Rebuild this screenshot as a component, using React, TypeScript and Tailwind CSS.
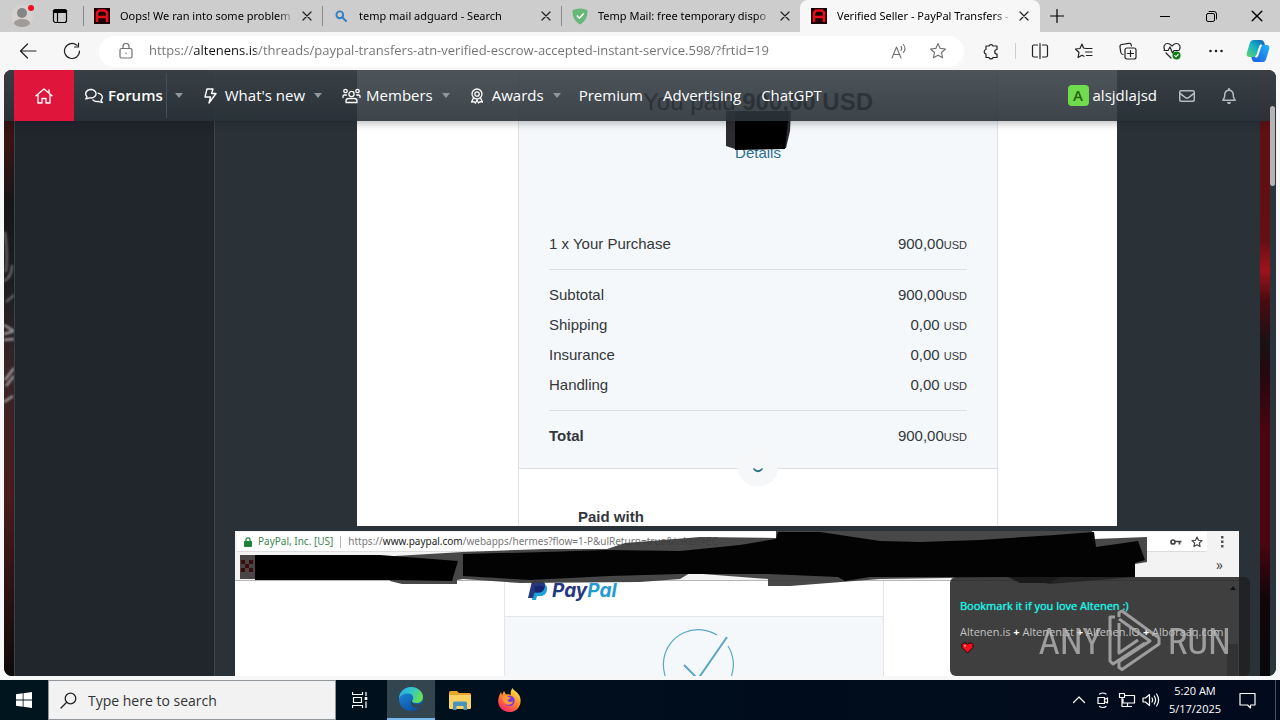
import type { ReactNode } from "react";
import { FaRegBell, FaRegComments, FaRegEnvelope } from "react-icons/fa6";

const line = {
  fill: "none",
  stroke: "currentColor",
  strokeLinecap: "round" as const,
  strokeLinejoin: "round" as const,
};

function Cross({ size = 10 }: { size?: number }) {
  return (
    <svg width={size} height={size} viewBox="0 0 10 10" {...line} strokeWidth="1.2">
      <path d="M1 1l8 8M9 1l-8 8" />
    </svg>
  );
}

function SiteMark() {
  return (
    <svg width="16" height="16" viewBox="0 0 16 16">
      <rect width="16" height="16" fill="#1a0000" />
      <path d="M3 14V4.500L5 2.500h6l2 2V14M3 9h10" fill="none" stroke="#e3101c" strokeWidth="2.600" />
    </svg>
  );
}

function SearchMark() {
  return (
    <svg width="12" height="12" viewBox="0 0 12 12" {...line} stroke="#2f7fc4" strokeWidth="1.900">
      <circle cx="4.800" cy="4.800" r="3.400" />
      <path d="M7.500 7.500L11 11" />
    </svg>
  );
}

function ShieldMark() {
  return (
    <svg width="16" height="17" viewBox="0 0 16 17">
      <path d="M8 .5c2.500.2 5.300.8 7.500 1.800 0 5-.8 10.200-7.500 14.200C1.300 12.500.5 7.300.5 2.300 2.700 1.300 5.500.7 8 .5z" fill="#67b779" />
      <path d="M4.800 7.500l2.600 2.700 4.300-4.700" fill="none" stroke="#fff" strokeWidth="1.400" />
    </svg>
  );
}

function Tab({ icon, title, active }: { icon: ReactNode; title: string; active?: boolean }) {
  return (
    <div
      className={
        active
          ? "flex h-8 w-60 min-w-0 items-center rounded-t-lg bg-[#f7f7f7] pr-[8px] pl-[11px]"
          : "flex h-8 w-[239px] min-w-0 items-center bg-[linear-gradient(#8a8a8a,#8a8a8a)] bg-[length:1px_20px] bg-left bg-no-repeat pr-[7px] pl-[11px]"
      }
    >
      <span className="flex w-4 shrink-0 justify-center">{icon}</span>
      <a
        href="#tab"
        className="ml-[10px] min-w-0 flex-1 overflow-hidden font-['Noto_Sans','Open_Sans',sans-serif] text-[11px] whitespace-nowrap text-black [mask-image:linear-gradient(to_right,black_90%,transparent)]"
      >
        {title}
      </a>
      <button aria-label="Close tab" className="ml-1 flex w-4 shrink-0 justify-center text-[#222]">
        <Cross />
      </button>
    </div>
  );
}

function TabStrip() {
  return (
    <div className="flex h-8 shrink-0 items-center bg-[#cdcdcd]">
      <button aria-label="Profile" className="ml-3 w-6">
        <svg width="24" height="26" viewBox="0 0 24 26">
          <circle cx="10" cy="13" r="11" fill="#d5d2cf" />
          <circle cx="10" cy="10" r="5" fill="#858585" />
          <ellipse cx="10" cy="20" rx="8" ry="4" fill="#a09b98" />
          <circle cx="19" cy="5" r="3" fill="#e81123" />
        </svg>
      </button>
      <button aria-label="Tab actions" className="mr-[15px] ml-4">
        <svg width="16" height="16" viewBox="0 0 16 16" {...line} strokeWidth="1.200">
          <rect x="1.500" y="1.500" width="13" height="13" rx="2" />
          <path d="M1.500 4.500h13M5.500 4.500v10" />
          <path d="M2 3h12" strokeWidth="2.500" />
        </svg>
      </button>
      <Tab icon={<SiteMark />} title="Oops! We ran into some problem" />
      <Tab icon={<SearchMark />} title="temp mail adguard - Search" />
      <Tab icon={<ShieldMark />} title="Temp Mail: free temporary dispo" />
      <Tab active icon={<SiteMark />} title="Verified Seller - PayPal Transfers -" />
      <button aria-label="New tab" className="ml-[10px]">
        <svg width="14" height="14" viewBox="0 0 14 14" {...line} strokeWidth="1.200">
          <path d="M7 .5v13M.5 7h13" />
        </svg>
      </button>
      <div className="ml-auto flex items-center">
        <button aria-label="Minimize" className="flex w-[46px] justify-center">
          <svg width="10" height="10" viewBox="0 0 10 10" {...line}>
            <path d="M0 5.500h10" />
          </svg>
        </button>
        <button aria-label="Restore" className="flex w-[46px] justify-center">
          <svg width="11" height="11" viewBox="0 0 11 11" {...line}>
            <rect x=".5" y="2.500" width="8" height="8" rx="1.500" />
            <path d="M3 .5h5a2.500 2.500 0 012.500 2.500v5" />
          </svg>
        </button>
        <button aria-label="Close window" className="flex w-[46px] justify-center">
          <Cross size={12} />
        </button>
      </div>
    </div>
  );
}

function ToolIcon({ label, children }: { label: string; children: ReactNode }) {
  return (
    <button aria-label={label} className="flex w-11 justify-center text-[#222]">
      <svg width="18" height="18" viewBox="0 0 18 18" {...line} strokeWidth="1.200">
        {children}
      </svg>
    </button>
  );
}

const star = "M9 1.500l2.200 4.900 5.300.6-4 3.500 1.100 5.300L9 13.200l-4.600 2.600 1.100-5.300-4-3.500 5.300-.6z";

function Toolbar() {
  return (
    <div className="flex h-[38px] shrink-0 items-center bg-[#f7f7f7] pl-[6px]">
      <ToolIcon label="Back">
        <path d="M17 9H1.500M8.500 2L1.500 9l7 7" />
      </ToolIcon>
      <ToolIcon label="Refresh">
        <path d="M16.500 9A7.500 7.500 0 1 1 14 3.400M15.500 1v4h-4" />
      </ToolIcon>
      <label className="ml-[5px] flex h-[31px] min-w-0 flex-1 items-center rounded-full bg-white text-[#707070]">
        <svg className="mr-4 ml-5 shrink-0" width="14" height="16" viewBox="0 0 14 16" {...line} strokeWidth="1.200">
          <rect x="1" y="5.500" width="12" height="9.500" rx="1.500" />
          <path d="M4 5.500V3.500a3 3 0 016 0v2M7 10v.6" />
        </svg>
        <input
          aria-label="Address"
          defaultValue="https://altenens.is/threads/paypal-transfers-atn-verified-escrow-accepted-instant-service.598/?frtid=19"
          className="min-w-0 flex-1 bg-[linear-gradient(to_right,#707070_45px,#111_45px,#111_107px,#707070_107px)] bg-clip-text text-[13px] text-transparent outline-none"
        />
        <svg className="mr-[21px] shrink-0" width="17" height="17" viewBox="0 0 17 17" {...line} strokeWidth="1.100">
          <path d="M1 15L5.500 4 10 15M2.500 11.500h6M10 3.500q1.500 1.500 0 4M12.300 1.500q3.500 4 0 8" />
        </svg>
        <svg className="mr-[17px] shrink-0" width="18" height="18" viewBox="0 0 18 18" {...line} strokeWidth="1.100">
          <path d={star} />
        </svg>
      </label>
      <div className="ml-[5px] flex items-center">
        <ToolIcon label="Extensions">
          <path d="M4 4h3a2.100 2.100 0 014 0h4v3.500a2.100 2.100 0 000 4.500v3.500h-4a2.100 2.100 0 01-4 0H4V12a2.300 2.300 0 010-4.500z" />
        </ToolIcon>
        <span className="mx-0.5 h-4 w-px bg-[#cfcfcf]" />
        <ToolIcon label="Split screen">
          <path d="M9 1.500v15M6.500 3H3a1.500 1.500 0 00-1.500 1.500v9A1.500 1.500 0 003 15h3.500M11.500 3H15a1.500 1.500 0 011.500 1.500v9A1.500 1.500 0 0115 15h-3.500" />
        </ToolIcon>
        <ToolIcon label="Favorites">
          <path d="M11 6.500L8.500 6 7 2 5 6.500.5 7 4 10.500 3 15.500l4-2.300 2 1.100M11.500 6.500h5.500M10.500 10h6.500M11.500 13.500h5.500" />
        </ToolIcon>
        <ToolIcon label="Collections">
          <rect x="6" y="6" width="11" height="11" rx="2" />
          <path d="M11.500 8.500v6M8.500 11.500h6M4 12.500c-1.500 0-2-1-2.300-2.300L1 5c-.2-1.500.4-2.300 1.700-2.500l7-1.200c1.300-.2 2.300.4 2.500 1.700l.2 1" />
        </ToolIcon>
        <ToolIcon label="Browser essentials">
          <path d="M1.500 7.500C0 4 2 1.500 4.500 1.500 7 1.500 8 3 9 4c1-1 2-2.500 4.500-2.500S18 4 16.500 7.500M1 8.500h4l2-3.500 2.500 6 1.500-2.500h5M3 11l5 5" />
          <circle cx="13.500" cy="13.500" r="4" fill="#107c10" stroke="none" />
          <path d="M11.800 13.600l1.200 1.200 2.200-2.400" stroke="#fff" />
        </ToolIcon>
        <ToolIcon label="Settings and more">
          <g fill="currentColor" stroke="none">
            <circle cx="3.500" cy="9" r="1.300" />
            <circle cx="9" cy="9" r="1.300" />
            <circle cx="14.500" cy="9" r="1.300" />
          </g>
        </ToolIcon>
        <button aria-label="Copilot" className="mr-[10px] ml-2">
          <svg width="24" height="24" viewBox="0 0 24 24">
            <defs>
              <linearGradient id="cpA" x1="0" y1="1" x2="1" y2="0">
                <stop offset="0" stopColor="#62d36f" />
                <stop offset=".5" stopColor="#16b1c4" />
                <stop offset="1" stopColor="#0d5bb5" />
              </linearGradient>
              <linearGradient id="cpB" x1="0" y1="1" x2="1" y2="0">
                <stop offset="0" stopColor="#1b5be0" />
                <stop offset="1" stopColor="#24b4f5" />
              </linearGradient>
            </defs>
            <path d="M7 1h8q2.500 0 3.300 2.500L19 6h-3q-2 0-2.600 2L11 16q-.7 2-3 2H3.500Q0 18 .8 14L4 3.500Q5 1 7 1z" fill="url(#cpA)" />
            <path d="M17 23H9Q6.500 23 6 20.500L5.300 18H8q2.300 0 3-2l2.400-8q.6-2 2.600-2h4.500q3.500 0 2.700 4L20 20.500q-1 2.500-3 2.500z" fill="url(#cpB)" />
            <path d="M9.500 18q1.500-.5 2-2l2.500-8q.5-1.500 1.500-2" fill="none" stroke="#fff" strokeWidth="2" />
          </svg>
        </button>
      </div>
    </div>
  );
}

function Caret() {
  return (
    <button aria-label="Open submenu" className="flex w-6 justify-center">
      <svg width="8" height="5" viewBox="0 0 8 5" fill="#8e979d">
        <path d="M0 0h8L4 5z" />
      </svg>
    </button>
  );
}

function SiteHeader() {
  return (
    <header className="absolute inset-x-0 top-0 z-10 flex h-[51px] items-center bg-[linear-gradient(rgba(58,66,72,0.9),rgba(42,50,57,0.91))] pl-[10px] text-[15px] text-white shadow-[0_0_8px_2px_rgba(20,20,30,0.3)]">
      <a href="#home" aria-label="Home" className="flex h-full w-[60px] items-center justify-center bg-[#e0153b]">
        <svg width="18" height="16" viewBox="0 0 18 16" {...line} strokeWidth="1.300">
          <path d="M1 7.800L9 1l8 6.800M3 6.500V15h4v-4.500h4V15h4V6.500M14 2v3" />
        </svg>
      </a>
      <nav className="flex items-center">
        <a href="#forums" className="flex items-center gap-[5px] pr-[3px] pl-[11px] font-semibold">
          <FaRegComments size={18} className="shrink-0" />
          Forums
        </a>
        <span className="h-[45px] w-px bg-[#465159]" />
        <Caret />
        <a href="#new" className="flex items-center gap-2 pr-px pl-3">
          <svg width="14" height="16" viewBox="0 0 14 16" {...line} strokeWidth="1.400">
            <path d="M4 1h6L8.500 5.500H13L6 15l1.500-6H2z" />
          </svg>
          What's new
        </a>
        <Caret />
        <a href="#members" className="flex items-center gap-[5px] pr-px pl-3">
          <svg width="19" height="16" viewBox="0 0 19 16" {...line} strokeWidth="1.300">
            <circle cx="9.500" cy="6" r="2.600" />
            <circle cx="3.500" cy="3" r="1.700" />
            <circle cx="15.500" cy="3" r="1.700" />
            <path d="M4 14.500V13q0-2.500 2.500-2.500h6q2.500 0 2.500 2.500v1.500zM1 9.500V8q0-1 1.500-1h2M18 9.500V8q0-1-1.500-1h-2" />
          </svg>
          Members
        </a>
        <Caret />
        <a href="#awards" className="flex items-center gap-2 pr-px pl-3">
          <svg width="14" height="16" viewBox="0 0 14 16" {...line} strokeWidth="1.300">
            <circle cx="7" cy="6" r="5" />
            <circle cx="7" cy="6" r="2.200" />
            <path d="M3.500 10L1.500 14l2.500-.3L5.500 15 7 12l1.500 3 1.500-1.300 2.500.3-2-4" />
          </svg>
          Awards
        </a>
        <Caret />
        <a href="#premium" className="px-[10px]">Premium</a>
        <a href="#advertising" className="px-[10px]">Advertising</a>
        <a href="#chatgpt" className="px-[10px]">ChatGPT</a>
      </nav>
      <div className="mr-[39px] ml-auto flex items-center">
        <a href="#account" className="flex items-center gap-1">
          <span className="flex size-[21px] items-center justify-center rounded-sm bg-[#70db4d] text-[15px] font-semibold text-[#24640f]">A</span>
          alsjdlajsd
        </a>
        <a href="#inbox" aria-label="Inbox" className="ml-[22px] text-[#b4bbc0]">
          <FaRegEnvelope size={16} />
        </a>
        <a href="#alerts" aria-label="Alerts" className="ml-[26px] text-[#b4bbc0]">
          <FaRegBell size={16} />
        </a>
      </div>
    </header>
  );
}

const receipt = [
  { label: "1 x Your Purchase", amount: "900,00", end: true },
  { label: "Subtotal", amount: "900,00" },
  { label: "Shipping", amount: "0,00 " },
  { label: "Insurance", amount: "0,00 " },
  { label: "Handling", amount: "0,00 ", end: true },
  { label: "Total", amount: "900,00", total: true },
];

function Receipt() {
  return (
    <section className="mx-auto h-[456px] w-full max-w-[760px] overflow-hidden bg-white pl-[42px] font-['Liberation_Sans',sans-serif] text-[15px] text-[#33373b]">
      <div className="mx-auto h-full w-[480px] border-x border-[#dfe2e5]">
        <div className="relative border-b border-[#dcdfe2] bg-[#f5f8fa] px-[30px] pt-[17px] pb-[17px]">
          <h1 className="text-center text-[24px] leading-[30px] text-black">
            You paid <b>900,00 USD</b>
          </h1>
          <div className="relative mt-[26px] mb-[66px] text-center leading-5">
            <a href="#details" className="text-[#2a6f94]">Details</a>
            <svg className="absolute -top-8 left-1/2 -ml-8" width="65" height="40" viewBox="0 0 65 40">
              <path d="M0 0h65l-1 20-4 17-51 1-9-3z" fill="#2c2c2e" />
              <path d="M9 0h54l-4 38-50 1z" fill="#000" />
            </svg>
          </div>
          <table className="w-full border-collapse leading-[30px]">
            <tbody>
              {receipt.map((r, i) => (
                <tr key={r.label} className={r.end ? "border-b border-[#dadfe3]" : ""}>
                  <th
                    scope="row"
                    className={
                      (r.total ? "text-left font-bold " : "text-left font-normal ") +
                      (r.end ? "pb-[10px] " : "") +
                      (i === 1 || r.total ? "pt-[10px]" : "")
                    }
                  >
                    {r.label}
                  </th>
                  <td
                    className={
                      "text-right whitespace-pre " + (r.end ? "pb-[10px] " : "") + (i === 1 || r.total ? "pt-[10px]" : "")
                    }
                  >
                    {r.amount}
                    <span className="text-[11px] leading-none">USD</span>
                  </td>
                </tr>
              ))}
            </tbody>
          </table>
          <button
            aria-label="Show more"
            className="absolute -bottom-[18px] left-1/2 -ml-5 flex h-9 w-10 items-center justify-center rounded-full bg-[#f5f7f9] pt-1"
          >
            <svg width="10" height="5" viewBox="0 0 10 5" {...line} stroke="#2a6f8c" strokeWidth="1.700">
              <path d="M1 1l1 1q3 2.500 6 0l1-1" />
            </svg>
          </button>
        </div>
        <h2 className="mt-[37px] ml-[59px] font-bold">Paid with</h2>
      </div>
    </section>
  );
}

function Redaction() {
  return (
    <svg className="absolute top-0 left-0" width="920" height="56" viewBox="235 531 920 56">
      <rect x="240" y="555" width="15" height="24" fill="#4b4444" />
      <path d="M241 560h4v4h-4zM249 560h4v4h-4zM245 564h4v4h-4zM241 568h4v4h-4zM249 568h4v4h-4z" fill="#3a0d0d" />
      <path d="M395 556L463 552 545 549 607 549 625 543 700 537 776 538 776 531 1092 531 1094 539 1147 537 1147 562 1135 564V577L1050 584 1010 577 880 579 790 586H768V579L690 573 680 579 640 582 520 583 463 579 457 580V584H402L390 581z" fill="#3a3838" fillOpacity=".92" />
      <path d="M255 555H380L458 561 452 581 395 580 255 580z" fill="#000" />
      <path d="M463 554L545 552 607 550 680 551 740 545 776 539 778 532 820 532 880 541 920 542 980 540 1055 535 1094 532 1096 547 1138 541 1145 560 1135 563V577H1060L1050 583 1020 583 1008 577 870 577 845 581 838 577 768 574 690 574 680 574 610 576 530 580 463 576z" fill="#030303" />
    </svg>
  );
}

function BrowserCapture() {
  return (
    <section className="relative mt-[5px] min-h-0 w-full flex-1 overflow-hidden bg-white">
      <div className="flex h-[50px] flex-col border-b border-[#b5b5b5] bg-[#f3f3f3]">
        <div className="flex items-center pt-[1px] pr-[15px] pl-[2px] font-['Noto_Sans',sans-serif] text-[10px] text-[#777]">
          <div className="flex h-5 min-w-0 flex-1 items-center border-b border-[#ddd] bg-white pr-1 pl-[7px] whitespace-nowrap">
            <svg width="8" height="10" viewBox="0 0 8 10">
              <rect y="4" width="8" height="6" rx="1" fill="#1c8436" />
              <path d="M2 4V2.800a2 2 0 014 0V4" fill="none" stroke="#1c8436" strokeWidth="1.300" />
            </svg>
            <span className="ml-[6px] text-[#3d8552]">PayPal, Inc. [US]</span>
            <span className="mx-[7px] h-3 w-px bg-[#bbb]" />
            <span className="min-w-0 flex-1 overflow-hidden">
              https://<span className="text-[#222]">www.paypal.com</span>/webapps/hermes?flow=1-P&amp;ulReturn=true&amp;token=EC
            </span>
            <svg className="mr-[9px]" width="12" height="8" viewBox="0 0 12 8" fill="none" stroke="#444" strokeWidth="1.700">
              <circle cx="3" cy="4" r="2" />
              <path d="M5 3.500h6.500M9.500 4v2.500" />
            </svg>
            <svg width="12" height="12" viewBox="0 0 18 18" {...line} stroke="#444" strokeWidth="1.800">
              <path d={star} />
            </svg>
          </div>
          <svg className="ml-[14px]" width="3" height="12" viewBox="0 0 3 12" fill="#555">
            <path d="M0 0h2.500v2.500H0zM0 4.500h2.500V7H0zM0 9h2.500v2.500H0z" />
          </svg>
        </div>
        <span className="mt-[5px] mr-4 self-end text-[14px] leading-4 text-[#444]">»</span>
      </div>
      <div className="ml-[269px] flex h-full w-[380px] flex-col border-x border-[#e4e6e8]">
        <div className="flex h-9 shrink-0 items-start border-b border-[#e4e6e8] pl-[23px]">
          <svg width="20" height="19" viewBox="0 0 20 19">
            <path d="M7 3h8q5 1 4 6-1 6-7 6H9l-1 4H4z" fill="#1da0dc" />
            <path d="M4 0h8q6 0 5 5.500-1 6-7 6H6.500L5 17H0z" fill="#25377e" />
            <path d="M7 5h6q3 0 3.500 1.500-1.500 5-6.500 5H7z" fill="#17266e" />
          </svg>
          <span className="ml-1 font-['Inter',sans-serif] text-[19px] leading-[19px] font-bold text-[#25377e] italic">
            Pay<span className="text-[#259bd3]">Pal</span>
          </span>
        </div>
        <div className="flex flex-1 justify-center bg-[#f5f8fa] pt-[11px] pl-[10px]">
          <svg width="74" height="74" viewBox="0 0 74 74" fill="none" stroke="#5ba7c2">
            <path d="M55 7A35 35 0 1 0 66 18" strokeWidth="1.200" />
            <path d="M22 37L36 51 65 9" strokeWidth="2" />
          </svg>
        </div>
      </div>
      <Redaction />
    </section>
  );
}

function Notice() {
  return (
    <aside className="absolute right-[26px] bottom-0 z-10 h-[99px] w-[300px] rounded-md bg-[rgba(32,32,32,0.86)] pt-[19px] pl-[10px] text-[11px] text-[#c2c2c2]">
      <p className="leading-5 text-[#1ff5e6] [text-shadow:0_0_1px_#1ff5e6]">Bookmark it if you love Altenen :)</p>
      <p className="mt-[6px] leading-5 whitespace-nowrap">
        <a href="#is">Altenen.is</a> <b className="text-white">+</b> <a href="#st">Altenen.st</a> <b className="text-white">+</b>{" "}
        <a href="#io">Altenen.IO</a> <b className="text-white">+</b> <a href="#alboraaq">Alboraaq.com</a>
      </p>
      <svg className="ml-[1px]" width="13" height="12" viewBox="0 0 13 12">
        <path d="M6.500 11L1 5.500V2.500L2.500 1H5l1.500 1.500L8 1h2.500L12 2.500v3z" fill="#f30f1c" stroke="#2a0000" />
        <path d="M3 3h2v1.500H3z" fill="#ff9a9a" />
      </svg>
      <div className="absolute top-2 right-3 bottom-0 flex w-[11px] flex-col items-center justify-between">
        <svg width="6" height="5" viewBox="0 0 6 5">
          <path d="M0 5l3-4 3 4z" fill="#151515" />
        </svg>
        <span className="h-8 w-full bg-[#333]" />
      </div>
    </aside>
  );
}

function Watermark() {
  return (
    <div className="pointer-events-none absolute right-[49px] bottom-[47px] z-20 flex items-center gap-[5px] font-['Liberation_Sans_Narrow','Roboto_Condensed',sans-serif] text-[37px] leading-none text-[#bdbdbd] opacity-75">
      <span>ANY</span>
      <svg width="56" height="64" viewBox="0 0 56 64" fill="none" stroke="currentColor" strokeWidth="3" strokeLinejoin="round">
        <path d="M12 8V3.500L15 2 52 29V35L15 60.500l-3-2v-6L43 32 12 10" />
        <path d="M8 8H3v44l3 3L38 34M12 14v30L31 31" />
      </svg>
      <span>RUN</span>
    </div>
  );
}

function LeftArt() {
  return (
    <svg className="h-full w-[10px] shrink-0" viewBox="0 0 10 606" preserveAspectRatio="none">
      <defs>
        <linearGradient id="la" x1="0" y1="0" x2="0" y2="1">
          <stop offset="0" stopColor="#1a1012" />
          <stop offset=".12" stopColor="#3a1412" />
          <stop offset=".22" stopColor="#161517" />
          <stop offset=".38" stopColor="#202022" />
          <stop offset=".5" stopColor="#3a2426" />
          <stop offset=".7" stopColor="#4a1b1b" />
          <stop offset=".9" stopColor="#24100f" />
          <stop offset="1" stopColor="#0c0a0a" />
        </linearGradient>
        <filter id="soft" x="-1" y="-.1" width="3" height="1.200">
          <feGaussianBlur stdDeviation=".8" />
        </filter>
      </defs>
      <rect width="10" height="606" fill="url(#la)" />
      <g fill="none" stroke="#98969a" filter="url(#soft)">
        <path d="M1 162q3 20 1 40M8 195q0 12-8 16M10 225l-8 7" strokeWidth="2" opacity=".7" />
        <path d="M0 255l10 6M0 264l10-3M0 270l10-1M10 298L1 310M2 316l8-10M0 332l9-6" strokeWidth="2.500" />
      </g>
    </svg>
  );
}

function Page() {
  return (
    <div className="mx-1 mb-1 min-h-0 flex-1 overflow-hidden rounded-lg bg-[#2a3238]">
      <div className="relative flex h-full">
        <SiteHeader />
        <LeftArt />
        <aside className="w-[200px] shrink-0 border-l border-[#36434b] bg-[#21252c]" />
        <main className="flex min-w-0 flex-1 flex-col border-l border-[#3a464d] bg-[#2a3238] pr-[21px] pl-5">
          <Receipt />
          <BrowserCapture />
        </main>
        <div className="w-[10px] shrink-0 bg-[linear-gradient(#5e0f14,#630f14_28%,#a0121b_33%,#4a0b12_38%,#1a1114_45%,#24080e_50%,#4a0511_60%,#4a0510_78%,#12060a_87%,#07070a)]" />
        <div className="w-[6px] shrink-0 bg-[#2b343b] pt-9">
          <div className="relative z-20 h-20 w-[5px] rounded-sm bg-[#b4b4b6]" />
        </div>
        <Notice />
      </div>
    </div>
  );
}

function Tray({ label, children }: { label: string; children: ReactNode }) {
  return (
    <button aria-label={label} className="flex w-6 justify-center">
      <svg width="18" height="16" viewBox="0 0 18 16" {...line} strokeWidth="1.200">
        {children}
      </svg>
    </button>
  );
}

function Taskbar() {
  return (
    <div className="flex h-10 shrink-0 items-center bg-[linear-gradient(to_right,#00151e,#000c1c_60%,#020b1d)] text-white">
      <button aria-label="Start" className="flex w-12 justify-center">
        <svg width="16" height="16" viewBox="0 0 16 16" fill="currentColor">
          <path d="M0 2.200L6.700 1.300v6.300H0zM7.500 1.200L16 0v7.600H7.500zM0 8.400h6.700v6.300L0 13.800zM7.500 8.400H16V16l-8.500-1.200z" />
        </svg>
      </button>
      <label className="flex h-10 w-72 items-center border border-[#8f9598] bg-[#f2f2f2] pl-[11px] text-[#222]">
        <svg width="17" height="17" viewBox="0 0 17 17" {...line} strokeWidth="1.300">
          <circle cx="10.500" cy="6.500" r="5.300" />
          <path d="M6.700 10.300L1 16" />
        </svg>
        <input
          aria-label="Search"
          placeholder="Type here to search"
          className="ml-[11px] min-w-0 flex-1 bg-transparent text-[14px] outline-none placeholder:text-[#333]"
        />
      </label>
      <button aria-label="Task view" className="mr-[3px] flex w-12 justify-center">
        <svg width="16" height="16" viewBox="0 0 16 16" fill="none" stroke="currentColor" strokeWidth="1.200">
          <path d="M.5 0v2.500h10V0M.5 16v-2.500h10V16M1.500 5.500h8v5h-8zM14 0v4M14 9.500V16" />
          <path d="M14 5v3" strokeWidth="2.600" />
        </svg>
      </button>
      <button aria-label="Microsoft Edge" className="flex h-10 w-12 items-center justify-center border-b-2 border-[#76b9ed] bg-[#33464f]">
        <svg width="24" height="24" viewBox="0 0 24 24">
          <defs>
            <linearGradient id="edgeTop" x1="0" y1="0" x2="1" y2=".4">
              <stop offset="0" stopColor="#2aa7df" />
              <stop offset=".5" stopColor="#2fc5d0" />
              <stop offset="1" stopColor="#63df5c" />
            </linearGradient>
            <linearGradient id="edgeLow" x1="0" y1="0" x2=".5" y2="1">
              <stop offset="0" stopColor="#1f8fe0" />
              <stop offset="1" stopColor="#0c55a8" />
            </linearGradient>
          </defs>
          <circle cx="12" cy="12" r="12" fill="url(#edgeLow)" />
          <path d="M0 12C0 5 5.500 0 12 0s12 4.500 12 10c0 4-3 6-6.500 6-3 0-4.500-1-4.500-2s1.200-1.300 1.200-3.300C14.200 8 12 6.500 9 6.500 4.500 6.500 1 8.500 0 12z" fill="url(#edgeTop)" />
          <path d="M13.500 12.500c-2 2 .5 5 4.500 5 2.500 0 4-1 5-1.500l-1.500 3.500c-1 1-3 1.500-5 1.200-4.500-.7-6.500-5.200-3-8.200z" fill="#33464f" />
        </svg>
      </button>
      <button aria-label="File Explorer" className="flex w-[50px] justify-center">
        <svg width="22" height="19" viewBox="0 0 22 19">
          <path d="M0 1.500Q0 0 1.500 0H8l2 2h10.500Q22 2 22 3.500V9H0z" fill="#e9a52c" />
          <path d="M0 4h22v12.500q0 1.500-1.500 1.500h-19Q0 18 0 16.500z" fill="#fdd162" />
          <path d="M4 19v-7q0-1.500 1.500-1.500h11Q18 10.500 18 12v7h-3.500v-4h-7v4z" fill="#4a93bd" />
        </svg>
      </button>
      <button aria-label="Firefox" className="flex w-12 justify-center">
        <svg width="23" height="24" viewBox="0 0 23 24">
          <defs>
            <linearGradient id="fx" x1=".8" y1="0" x2=".2" y2="1">
              <stop offset="0" stopColor="#fff04a" />
              <stop offset=".45" stopColor="#ff8c2b" />
              <stop offset="1" stopColor="#f5206a" />
            </linearGradient>
          </defs>
          <path d="M14.500 0c1 3 6 4 7.500 9 2.500 8-3 15-10.500 15S-.5 18 .3 11.500C.6 8 2 6 3 4l1 3 2-4 2 3.500c2-.5 3.500 0 5 .5C12 5 13 2 14.500 0z" fill="url(#fx)" />
          <circle cx="11.500" cy="12.800" r="5.200" fill="#7a3be0" />
          <path d="M4.500 9c2-1.500 4.500-1 6 0l2 .5c.5 1.500-2.500 1.500-3 3 1 2 4 1.500 5.500 1-1 3.500-6 4.500-8.500 1.500-1.200-1.500-2-3.500-2-6z" fill="#ff9a36" />
        </svg>
      </button>
      <div className="ml-auto flex items-center">
        <Tray label="Show hidden icons">
          <path d="M3.500 10.500L9 5l5.500 5.500" />
        </Tray>
        <Tray label="Meet now">
          <path d="M4 5.500h6.500v6H4zM10.500 7.500l3-1.500v5l-3-1.500M5.500 2Q9 0 12 2M5.500 14.500Q9 16.500 12 14.500" />
        </Tray>
        <Tray label="Network">
          <path d="M7.500 3.500h9v7.500H5V7M9.500 11v3.500M6.500 14.500h7M1.500 1.500h5v4h-5zM4 5.500v9h2" />
        </Tray>
        <Tray label="Volume">
          <path d="M1 6v4h2.500L7.500 13.500v-11L3.500 6zM10 6q1.200 2 0 4M12.300 4q2.500 4 0 8M14.600 2q4 6 0 12" />
        </Tray>
        <div className="w-16 text-center text-[11px] leading-[18px]">
          <div>5:20 AM</div>
          <div>5/17/2025</div>
        </div>
        <button aria-label="Notifications" className="mr-[19px] ml-3">
          <svg width="17" height="17" viewBox="0 0 17 17" {...line} strokeWidth="1.200">
            <path d="M1 1.500h15V13h-4.500v3L8.500 13H1z" />
          </svg>
        </button>
        <span className="mr-1 h-10 w-px bg-[#4a5360]" />
      </div>
    </div>
  );
}

export default function App() {
  return (
    <div className="relative flex h-screen flex-col overflow-hidden bg-[#f7f7f7] font-['Open_Sans','Noto_Sans',sans-serif]">
      <TabStrip />
      <Toolbar />
      <Page />
      <Taskbar />
      <Watermark />
    </div>
  );
}
